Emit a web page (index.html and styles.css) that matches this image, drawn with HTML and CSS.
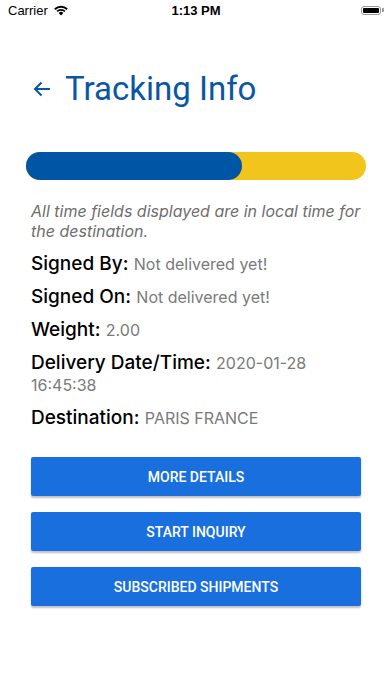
FILE: index.html
```html
<!DOCTYPE html>
<html lang="en">
<head>
    <meta charset="UTF-8">
    <meta name="viewport" content="width=device-width, initial-scale=1.0">
    <title>Tracking Info</title>
    <link rel="stylesheet" href="styles.css">
</head>
<body>
    <div class="status-bar">
        <div class="status-left">
            <span>Carrier</span>
            <svg class="wifi" width="16" height="12" viewBox="0 0 16 12">
                <path d="M8 11.5 L5.6 9 A3.4 3.4 0 0 1 10.4 9 Z" fill="#000"/>
                <path d="M3.4 6.8 A6.5 6.5 0 0 1 12.6 6.8 L11.3 8.1 A4.7 4.7 0 0 0 4.7 8.1 Z" fill="#000"/>
                <path d="M1.2 4.6 A9.6 9.6 0 0 1 14.8 4.6 L13.5 5.9 A7.8 7.8 0 0 0 2.5 5.9 Z" fill="#000"/>
            </svg>
        </div>
        <div class="status-time">1:13 PM</div>
        <div class="status-right">
            <div class="battery"><div class="battery-level"></div></div>
            <div class="battery-cap"></div>
        </div>
    </div>

    <div class="page">
        <div class="header">
            <svg class="back" width="18" height="16" viewBox="0 0 18 16">
                <path d="M17 8 H2 M8.5 1.5 L2 8 L8.5 14.5" stroke="#0a56a5" stroke-width="2" fill="none"/>
            </svg>
            <h1>Tracking Info</h1>
        </div>

        <div class="progress">
            <div class="progress-fill" style="width: 63.5%"></div>
        </div>

        <p class="note">All time fields displayed are in local time for the destination.</p>

        <div class="info">
            <div class="info-row"><span class="label">Signed By:</span> <span class="value">Not delivered yet!</span></div>
            <div class="info-row"><span class="label">Signed On:</span> <span class="value">Not delivered yet!</span></div>
            <div class="info-row"><span class="label">Weight:</span> <span class="value">2.00</span></div>
            <div class="info-row"><span class="label">Delivery Date/Time:</span> <span class="value">2020-01-28 16:45:38</span></div>
            <div class="info-row"><span class="label">Destination:</span> <span class="value">PARIS FRANCE</span></div>
        </div>

        <div class="actions">
            <button>More Details</button>
            <button>Start Inquiry</button>
            <button>Subscribed Shipments</button>
        </div>
    </div>
</body>
</html>
```

FILE: styles.css
```css
body {
    margin: 0;
    background: #fff;
    color: #000;
    font-family: Inter, 'Liberation Sans', sans-serif;
    width: 392px;
    height: 696px;
    overflow: hidden;
}

.status-bar {
    height: 20px;
    display: flex;
    align-items: center;
    justify-content: space-between;
    padding: 0 8px;
    font-family: 'Liberation Sans', sans-serif;
    font-size: 13px;
}

.status-left {
    display: flex;
    align-items: center;
    gap: 5px;
    width: 80px;
}

.status-time {
    font-weight: bold;
}

.status-right {
    width: 80px;
    display: flex;
    justify-content: flex-end;
    align-items: center;
}

.battery {
    width: 20px;
    height: 9px;
    border: 1px solid #999;
    border-radius: 3px;
    padding: 1px;
    box-sizing: border-box;
}

.battery-level {
    width: 100%;
    height: 100%;
    background: #000;
    border-radius: 1px;
}

.battery-cap {
    width: 1.5px;
    height: 4px;
    background: #999;
    margin-left: 1px;
    border-radius: 0 1px 1px 0;
}

.page {
    padding: 0 26px;
}

.header {
    display: flex;
    align-items: center;
    margin-top: 48px;
    padding-left: 7px;
}

.back {
    margin-right: 14px;
}

.header h1 {
    margin: 0;
    font-family: Roboto, sans-serif;
    font-weight: 400;
    font-size: 33px;
    color: #0a56a5;
    line-height: 42px;
}

.progress {
    margin-top: 42px;
    height: 28px;
    border-radius: 14px;
    background: #f2c51c;
}

.progress-fill {
    height: 100%;
    border-radius: 14px;
    background: #0055a5;
}

.note {
    margin: 21px 0 0;
    padding-left: 5px;
    font-style: italic;
    font-size: 16px;
    line-height: 20px;
    color: #6e6e6e;
}

.info {
    padding-left: 5px;
    margin-top: 12px;
}

.info-row {
    font-size: 19px;
    line-height: 22px;
    margin-bottom: 11px;
}

.label {
    font-weight: 500;
}

.value {
    font-size: 16px;
    line-height: 21px;
    color: #7a7a7a;
}

.actions {
    margin-top: 28px;
    padding: 0 5px;
    display: flex;
    flex-direction: column;
    gap: 16px;
}

.actions button {
    height: 39px;
    border: none;
    border-radius: 2px;
    background: #1a6fde;
    color: #fff;
    font-family: Roboto, sans-serif;
    font-weight: 500;
    font-size: 14px;
    text-transform: uppercase;
    box-shadow: 0 2px 2px rgba(0, 0, 0, 0.25);
}
```
